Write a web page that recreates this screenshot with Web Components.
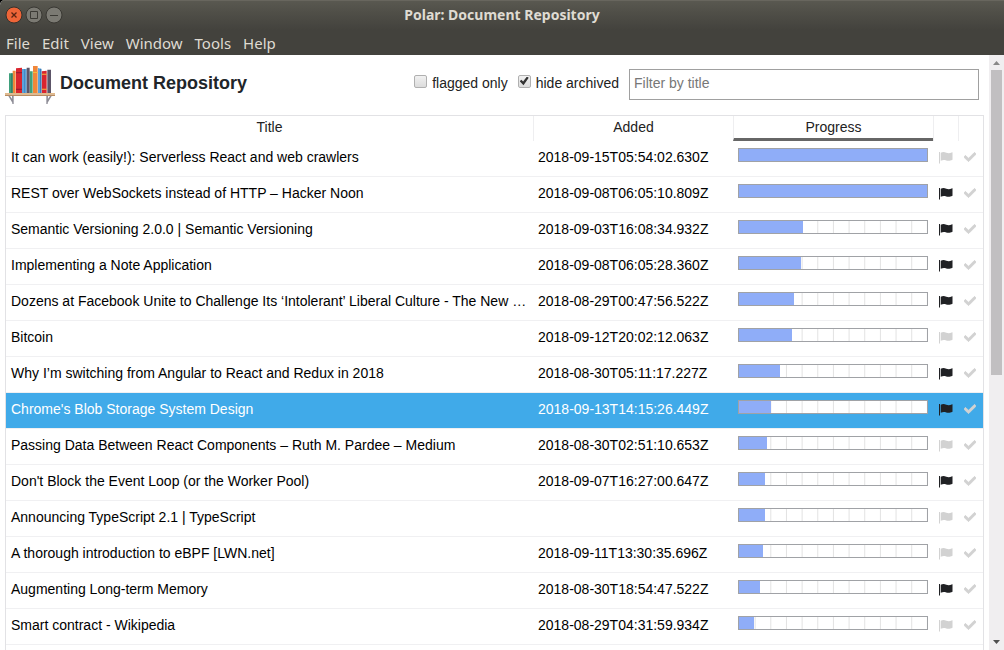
<!DOCTYPE html>
<html lang="en">
<head>
<meta charset="utf-8">
<title>Polar: Document Repository</title>
<style>
  html, body { margin: 0; height: 100%; }
  body { overflow: hidden; background: #000; font: 14px/20px "Liberation Sans", Arial, sans-serif; color: #222; }
</style>
</head>
<body>
<polar-window></polar-window>

<script>
function define(name, html, setup) {
  const template = document.createElement('template');
  template.innerHTML = '<style>*{box-sizing:border-box}button{font:inherit;color:inherit;background:none;border:0;padding:0;margin:0}</style>' + html;
  customElements.define(name, class extends HTMLElement {
    connectedCallback() {
      if (this.shadowRoot) return;
      this.attachShadow({ mode: 'open' }).append(template.content.cloneNode(true));
      if (setup) setup(this, this.shadowRoot);
    }
  });
}

define('title-bar', `
  <style>
    :host { display: grid; grid-template-columns: 1fr auto 1fr; align-items: center; height: 30px; padding: 0 5px;
      background: linear-gradient(#5a5951, #504f48 40%, #43423d); box-shadow: inset 0 1px #68665e;
      color: #dfdbd2; font: bold 14px/20px "Noto Sans", sans-serif; }
    .controls { display: flex; gap: 2px; }
    button { width: 18px; height: 18px; }
    svg { display: block; }
    h1 { margin: 0; font: inherit; }
  </style>
  <div class="controls">
    <button aria-label="Close"><svg width="18" height="18"><circle cx="9" cy="9" r="8" fill="#ee6538" stroke="#35322d"/><path d="M6.5 6.5l5 5m0-5l-5 5" stroke="#5a2412" stroke-width="1.3"/></svg></button>
    <button aria-label="Maximize"><svg width="18" height="18"><circle cx="9" cy="9" r="8" fill="#7b7a73" stroke="#393833"/><path d="M5.5 5.5h7v7h-7z" fill="none" stroke="#3b3a35"/></svg></button>
    <button aria-label="Minimize"><svg width="18" height="18"><circle cx="9" cy="9" r="8" fill="#7b7a73" stroke="#393833"/><path d="M5 9.5h8" stroke="#3b3a35"/></svg></button>
  </div>
  <h1><slot></slot></h1>
`);

define('menu-bar', `
  <style>
    :host { display: flex; gap: 12px; height: 25px; padding: 0 6px; align-items: center; background: #43423d;
      color: #dfdbd2; font: 15px/20px "Noto Sans", sans-serif; }
  </style>
  <button>File</button><button>Edit</button><button>View</button><button>Window</button><button>Tools</button><button>Help</button>
`);

define('shelf-logo', `
  <style>:host { display: block; } svg { display: block; }</style>
  <svg width="50" height="41" viewBox="15 27 150 123" aria-hidden="true">
    <path fill="#3fa07c" d="M27 55h11v59H27zM89 49h9v65h-9z"/>
    <path fill="#f0873a" d="M38 47h9v67h-9zM99 33h14v81H99z"/>
    <path fill="#d9252f" d="M48 40l18-2v76H48zM125 49l15-2v67h-15z"/>
    <path fill="#5ba3dc" d="M66 42h14v72H66zM114 39l10 3v72h-10z"/>
    <path fill="#5c5568" d="M80 38h9v76h-9zM142 44h11v70h-11z"/>
    <path fill="#9c1c30" d="M48 51h18v4H48zM48 101h18v4H48z"/>
    <path fill="#f3b93f" d="M125 56h15v3h-15zM125 101h15v3h-15zM99 51h14v3H99z"/>
    <path fill="#3d7fb8" d="M73 42h2v72h-2zM120 41h4v73h-4z"/>
    <path fill="#2c7860" d="M34 55h4v59h-4z"/>
    <path fill="#e2b98a" d="M15 114h150v5H15z"/><path fill="#b88c62" d="M15 119h150v4H15z"/>
    <path fill="#8d8c96" d="M25 123h5l11 16v8h-4v-4zM155 123h-5l-11 16v8h4v-4zM36 123h5v24h-4zM144 123h-5v24h4z"/>
  </svg>
`);

define('check-option', `
  <style>
    :host { display: block; }
    label { display: flex; align-items: center; gap: 5px; }
    input { appearance: none; width: 13px; height: 13px; margin: 0 0 3px; border: 1px solid #b0b0b0; border-radius: 2px;
      background: linear-gradient(#f1f1f1, #dcdcdc); display: grid; }
    input:checked::after { content: ""; margin: 1px; background: #333;
      clip-path: polygon(0 52%, 18% 36%, 38% 56%, 80% 0, 100% 14%, 42% 96%); }
  </style>
  <label><input type="checkbox"><slot></slot></label>
`, (host, root) => { root.querySelector('input').checked = host.hasAttribute('checked'); });

define('repo-header', `
  <style>
    :host { display: flex; align-items: center; height: 60px; padding: 0 5px 2px 0; }
    h2 { margin: 0 auto 2px 5px; font: bold 18px/24px "Liberation Sans", Arial, sans-serif; color: #212529; white-space: nowrap; }
    .filters { display: flex; align-items: center; gap: 10px; }
    check-option { margin-bottom: 3px; }
    input { width: 350px; height: 31px; padding: 0 4px 2px; border: 1px solid #a0a0a0; background: #fff; color: #222;
      font: 14px/20px "Liberation Sans", Arial, sans-serif; outline: 0; }
    input::placeholder { color: #777; opacity: 1; }
  </style>
  <shelf-logo></shelf-logo>
  <h2>Document Repository</h2>
  <div class="filters">
    <check-option>flagged only</check-option>
    <check-option checked>hide archived</check-option>
    <input type="text" placeholder="Filter by title" aria-label="Filter by title">
  </div>
`);

define('read-progress', `
  <style>
    :host { display: block; }
    progress { appearance: none; display: block; width: 100%; height: 14px; border: 1px solid #a0a2a6; background: #fff; }
    ::-webkit-progress-bar { background: linear-gradient(to right, #e2e2e2 1px, #fff 1px) 0 0 / calc(100% / 12) 100%; }
    ::-webkit-progress-value { background: #8fadf8; }
  </style>
  <progress max="100" aria-label="Progress"></progress>
`, (host, root) => { root.querySelector('progress').value = Number(host.getAttribute('value')); });

define('flag-toggle', `
  <style>
    :host { display: block; color: #d2d2d2; }
    :host([on]) { color: #202124; }
    button, svg { display: block; }
  </style>
  <button aria-label="Flag"><svg width="14" height="13" viewBox="0 0 14 13" fill="currentColor">
    <path d="M0 1h1v11.500H0zM1.700 1.800C4 .6 5.500 1 7.300 1.700c2 .8 3.500.6 5.900-.4.200 0 .3.100.3.300v7.200c-2.700 1.300-4.300 1.300-6.300.600-2-.7-3.300-.6-5.500.4z"/>
  </svg></button>
`, (host, root) => root.querySelector('button').setAttribute('aria-pressed', host.hasAttribute('on')));

define('archive-toggle', `
  <style>:host { display: block; color: #d2d2d2; } button, svg { display: block; }</style>
  <button aria-label="Archive"><svg width="12" height="12" viewBox="0 0 512 512" fill="currentColor" stroke="currentColor" stroke-width="34">
    <path d="M173.898 439.404l-166.400-166.400c-9.997-9.997-9.997-26.206 0-36.204l36.203-36.204c9.997-9.998 26.207-9.998 36.204 0L192 312.690 432.095 72.596c9.997-9.997 26.207-9.997 36.204 0l36.203 36.204c9.997 9.997 9.997 26.206 0 36.204l-294.400 294.401c-9.998 9.997-26.207 9.997-36.204-.001z"/>
  </svg></button>
`);

const DOCS = [
  ['It can work (easily!): Serverless React and web crawlers', '2018-09-15T05:54:02.630Z', 100, 0],
  ['REST over WebSockets instead of HTTP – Hacker Noon', '2018-09-08T06:05:10.809Z', 100, 1],
  ['Semantic Versioning 2.0.0 | Semantic Versioning', '2018-09-03T16:08:34.932Z', 34, 1],
  ['Implementing a Note Application', '2018-09-08T06:05:28.360Z', 33, 1],
  ['Dozens at Facebook Unite to Challenge Its ‘Intolerant’ Liberal Culture - The New …', '2018-08-29T00:47:56.522Z', 29, 1],
  ['Bitcoin', '2018-09-12T20:02:12.063Z', 28, 0],
  ['Why I’m switching from Angular to React and Redux in 2018', '2018-08-30T05:11:17.227Z', 22, 1],
  ["Chrome's Blob Storage System Design", '2018-09-13T14:15:26.449Z', 17, 1, 1],
  ['Passing Data Between React Components – Ruth M. Pardee – Medium', '2018-08-30T02:51:10.653Z', 15, 0],
  ["Don't Block the Event Loop (or the Worker Pool)", '2018-09-07T16:27:00.647Z', 14, 1],
  ['Announcing TypeScript 2.1 | TypeScript', '', 14, 0],
  ['A thorough introduction to eBPF [LWN.net]', '2018-09-11T13:30:35.696Z', 13, 0],
  ['Augmenting Long-term Memory', '2018-08-30T18:54:47.522Z', 11, 1],
  ['Smart contract - Wikipedia', '2018-08-29T04:31:59.934Z', 8, 0]
];

define('doc-table', `
  <style>
    :host { display: block; border: 1px solid #e2e2e5; border-bottom: 0; }
    table { width: 100%; border-collapse: separate; border-spacing: 0; table-layout: fixed; }
    col.wide { width: 200px; }
    col.icon { width: 25px; }
    th { height: 25px; padding: 0 0 3px; font-weight: normal; border-left: 1px solid #eeeef0; color: #222; line-height: 18px; }
    th:first-child { border-left: 0; }
    th.sorted { border-bottom: 3px solid #666; padding: 0; }
    td { height: 36px; padding: 0 5px 4px; border-bottom: 1px solid #f0f0f2; color: #000; white-space: nowrap;
      overflow: hidden; text-overflow: ellipsis; }
    td.bar { padding-bottom: 8px; }
    td.icon { padding: 0 0 3px 6px; overflow: visible; }
    tr.selected td { color: #fff; background: #40aae9; background-clip: padding-box; }
  </style>
  <table>
    <colgroup><col><col class="wide"><col class="wide"><col class="icon"><col class="icon"></colgroup>
    <thead><tr><th>Title</th><th>Added</th><th class="sorted">Progress</th><th aria-label="Flagged"></th><th aria-label="Archived"></th></tr></thead>
    <tbody></tbody>
  </table>
`, (host, root) => {
  const body = root.querySelector('tbody');
  for (const [title, added, progress, flagged, selected] of DOCS) {
    const row = body.insertRow();
    if (selected) row.className = 'selected';
    row.insertCell().textContent = title;
    row.insertCell().textContent = added;
    const cell = (cls, tag, attr, value) => {
      const td = row.insertCell();
      td.className = cls;
      const el = document.createElement(tag);
      if (attr) el.setAttribute(attr, value);
      td.append(el);
    };
    cell('bar', 'read-progress', 'value', progress);
    cell('icon', 'flag-toggle', flagged ? 'on' : '', '');
    cell('icon', 'archive-toggle');
  }
});

define('side-scrollbar', `
  <style>
    :host { display: flex; flex-direction: column; width: 15px; background: #f0eef0; }
    svg { display: block; width: 15px; height: 15px; flex: none; }
    .track { flex: 1; padding: 0 2px; }
    .thumb { height: 54%; background: #c1bfc1; }
  </style>
  <svg viewBox="0 0 15 15" fill="#888"><path d="M4 10l3.500-4 3.500 4z"/></svg>
  <div class="track"><div class="thumb"></div></div>
  <svg viewBox="0 0 15 15" fill="#505050"><path d="M4 5l3.500 4 3.500-4z"/></svg>
`);

define('polar-window', `
  <style>
    :host { display: flex; flex-direction: column; height: 100vh; overflow: hidden; border-top-left-radius: 5px; background: #fff; }
    .page { flex: 1; min-height: 0; display: flex; }
    main { flex: 1; min-width: 0; display: flex; flex-direction: column; padding: 0 5px; overflow: hidden; }
    doc-table { flex: 1 0 auto; }
  </style>
  <title-bar>Polar: Document Repository</title-bar>
  <menu-bar></menu-bar>
  <div class="page">
    <main><repo-header></repo-header><doc-table></doc-table></main>
    <side-scrollbar></side-scrollbar>
  </div>
`);
</script>
</body>
</html>
